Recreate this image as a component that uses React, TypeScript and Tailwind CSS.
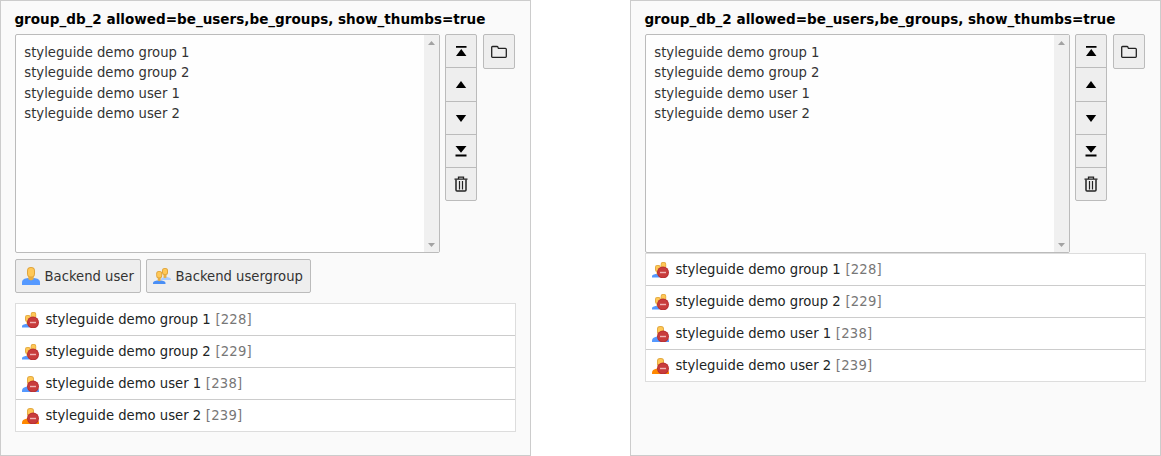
import React from "react";

type RecordKind = "group" | "user" | "admin";

interface RecordItem {
  title: string;
  uid: number;
  kind: RecordKind;
}

const records: RecordItem[] = [
  { title: "styleguide demo group 1", uid: 228, kind: "group" },
  { title: "styleguide demo group 2", uid: 229, kind: "group" },
  { title: "styleguide demo user 1", uid: 238, kind: "user" },
  { title: "styleguide demo user 2", uid: 239, kind: "admin" },
];

function UserIcon() {
  return (
    <svg className="block size-[18px] shrink-0" viewBox="0 0 18 18">
      <path d="M0 18v-2.500C0 12.500 2.500 11.500 6 11h6c3.500.500 6 1.500 6 4.500V18z" fill="#5599ff" />
      <path d="M6.300 8h5.400v4.200L9 13.500l-2.700-1.300z" fill="#e8ae43" />
      <rect x="5" y="0" width="8" height="10.500" rx="3.800" fill="#e0a53c" />
      <rect x="6" y="1" width="6" height="8.500" rx="2.800" fill="#ffc857" />
    </svg>
  );
}

function GroupIcon() {
  return (
    <svg className="block size-[18px] shrink-0" viewBox="0 0 18 18">
      <path d="M8 13v-.500c0-1.500 1-2 3-2.500h3c3 .500 4 1.200 4 3z" fill="#aaccff" />
      <path d="M10.500 7h3v3.500l-1.500.700-1.500-.700z" fill="#e8ae43" />
      <rect x="9" y="1" width="6" height="7" rx="2.500" fill="#e0a53c" />
      <rect x="10" y="1.800" width="4" height="5.400" rx="1.800" fill="#ffc857" />
      <path d="M0 17v-.500c0-2 1-2.500 4-3h4.500c3 .500 4 1 4 3v.500z" fill="#4a8ff5" />
      <path d="M4.700 9.500h3v4l-1.500.700-1.500-.700z" fill="#e8ae43" />
      <rect x="3.200" y="4" width="6" height="7.200" rx="2.500" fill="#e0a53c" />
      <rect x="4.100" y="4.800" width="4.200" height="5.600" rx="1.900" fill="#ffc857" />
    </svg>
  );
}

function RecordIcon({ kind }: { kind: RecordKind }) {
  return (
    <svg className="block h-4 w-[17px] shrink-0" viewBox="0 0 17 16">
      {kind === "group" ? (
        <>
          <path d="M0 15.500v-1c0-1.500 1-2 3.500-2.500h4v3.500z" fill="#5599ff" />
          <rect x="8.700" y="0" width="5.500" height="7" rx="2" fill="#e3a93f" />
          <rect x="9.500" y=".8" width="3.900" height="5" rx="1.500" fill="#ffc857" />
          <rect x="3" y="3" width="5.800" height="7" rx="2.200" fill="#e3a93f" />
          <rect x="3.900" y="3.800" width="4" height="5.200" rx="1.600" fill="#ffc857" />
          <path d="M4.500 9h3v3l-1.500 1-1.500-1z" fill="#eab041" />
        </>
      ) : (
        <>
          <path
            d="M0 16v-1.500c0-2 1.500-3.300 5-4h7c3.500.7 5 2 5 4V16z"
            fill={kind === "admin" ? "#ff8700" : "#5599ff"}
          />
          <rect x="5" y="0" width="7" height="9" rx="3" fill="#e3a93f" />
          <rect x="5.900" y=".9" width="5.200" height="7.200" rx="2.100" fill="#ffc857" />
          <path d="M5.800 7.500h4v4L8 12.500l-2.200-1z" fill="#eab041" />
        </>
      )}
      <circle cx="11" cy="10.400" r="6" fill="#b72e32" />
      <circle cx="11" cy="10.400" r="5" fill="#c83c3c" />
      <rect x="8" y="9.800" width="6" height="1.400" fill="#f0b4b4" />
    </svg>
  );
}

function MoveIcon({ name }: { name: string }) {
  return (
    <svg className="block size-4" viewBox="0 0 16 16">
      {name === "top" && <path d="M3 3h10.500v1.800H3zM8.250 6l5.200 7H3z" fill="#000" />}
      {name === "up" && <path d="M8 4l5.200 7H2.800z" fill="#000" />}
      {name === "down" && <path d="M8 12L2.800 5h10.400z" fill="#000" />}
      {name === "bottom" && <path d="M8 9.800L2.500 3h11zM2.500 11.500h11v2h-11z" fill="#000" />}
      {name === "delete" && (
        <g fill="none" stroke="#222">
          <path d="M1.500 3.200h13M5.500 3V1.200h5V3" strokeWidth="1.300" />
          <path d="M3 3.500v10.500q0 1 1 1h8q1 0 1-1V3.500" strokeWidth="1.500" />
          <path d="M6.500 5v8.500M9.500 5v8.500" strokeWidth="1.200" />
        </g>
      )}
    </svg>
  );
}

function Controls() {
  return (
    <div className="ml-[5px] flex w-8 flex-col self-start rounded-[2px] border border-[#bbb] bg-[#eee]">
      <div className="box-content flex h-8 items-center justify-center border-b border-[#bbb]"><MoveIcon name="top" /></div>
      <div className="box-content flex h-[33px] items-center justify-center border-b border-[#bbb]"><MoveIcon name="up" /></div>
      <div className="box-content flex h-8 items-center justify-center border-b border-[#bbb]"><MoveIcon name="down" /></div>
      <div className="box-content flex h-8 items-center justify-center border-b border-[#bbb]"><MoveIcon name="bottom" /></div>
      <div className="flex h-8 items-center justify-center"><MoveIcon name="delete" /></div>
    </div>
  );
}

function Selection() {
  return (
    <div className="flex h-[219px] w-[425px] justify-between rounded-[2px] border border-[#bbb] bg-[#fefefe]">
      <ul className="pt-2 pl-[8.300px] text-[#333]">
        {records.map((r, i) => (
          <li key={r.uid} className={i === 1 ? "h-[21px] leading-5" : "h-5 leading-5"}>{r.title}</li>
        ))}
      </ul>
      <div className="flex w-[15px] flex-col items-center justify-between bg-[#f0f0f0] pt-1.5 pb-[5px]">
        <svg className="h-1 w-[7px]" viewBox="0 0 7 4"><path d="M3.500 0L7 4H0z" fill="#a3a3a3" /></svg>
        <svg className="h-1 w-[7px]" viewBox="0 0 7 4"><path d="M0 0h7L3.500 4z" fill="#a3a3a3" /></svg>
      </div>
    </div>
  );
}

function Panel({ withButtons = false }: { withButtons?: boolean }) {
  return (
    <section className="h-[456px] w-[531px] border border-[#ccc] bg-[#fafafa] px-3.5">
      <h2 className="-ml-[0.600px] h-[33px] pt-2 text-[13.550px] leading-5 font-bold whitespace-nowrap text-black">
        group_db_2 allowed=be_users,be_groups, show_thumbs=true
      </h2>
      <div className="flex">
        <Selection />
        <Controls />
        <div className="ml-1.5 flex h-[35px] w-8 items-center justify-center rounded-[2px] border border-[#bbb] bg-[#eee]">
          <svg className="block size-4" viewBox="0 0 16 16">
            <path d="M.7 12.500V3.300q0-.8.8-.8h4.700q.7 0 .9 1l.3.800h7q.9 0 .9.900V12.500q0 .8-.8.8H1.500q-.8 0-.8-.8z" fill="none" stroke="#222" strokeWidth="1.300" />
          </svg>
        </div>
      </div>
      {withButtons && (
        <div className="mt-1.5 mb-2.5 flex gap-[5px] text-[#333]">
          <button className="flex h-[34px] w-[126px] items-center gap-[4.500px] rounded-[2px] border border-[#bbb] bg-[#eee] pl-1.5 whitespace-nowrap">
            <UserIcon />
            <span className="pt-0.5">Backend user</span>
          </button>
          <button className="flex h-[34px] w-[165px] items-center gap-[4.500px] rounded-[2px] border border-[#bbb] bg-[#eee] pl-1.5 whitespace-nowrap">
            <GroupIcon />
            <span className="pt-0.5">Backend usergroup</span>
          </button>
        </div>
      )}
      <ul className="w-[501px] border border-[#ddd] bg-white">
        {records.map((r) => (
          <li key={r.uid} className="flex h-8 items-center border-b border-[#ccc] pl-1.5 text-[#212424] last:h-[31px] last:border-b-0">
            <RecordIcon kind={r.kind} />
            <span className="ml-[6.500px] whitespace-pre">{r.title} <span className="ml-[0.500px] tracking-[0.200px] text-[#777]">[{r.uid}]</span></span>
          </li>
        ))}
      </ul>
    </section>
  );
}

export default function App() {
  return (
    <main className="flex h-[456px] w-[1161px] justify-between overflow-hidden bg-white font-['DejaVu_Sans',sans-serif] text-[13.200px] leading-5">
      <Panel withButtons />
      <Panel />
    </main>
  );
}
